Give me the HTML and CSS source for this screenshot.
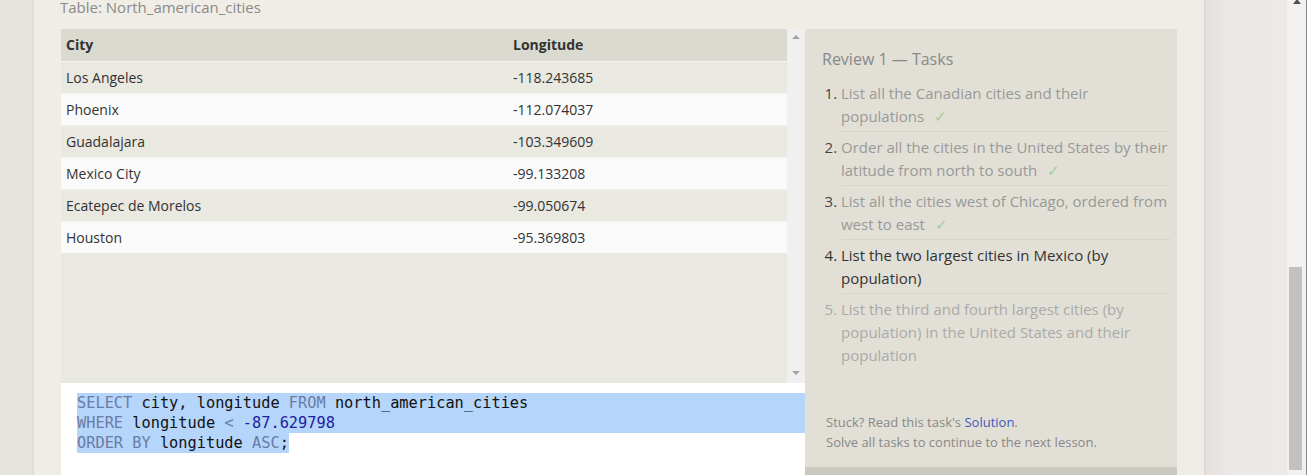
FILE: index.html
```html
<!DOCTYPE html>
<html lang="en">
<head>
<meta charset="utf-8">
<title>Review 1 — Tasks</title>
<link rel="stylesheet" href="styles.css">
</head>
<body>
<div class="page">
  <div class="gutter"></div>
  <main class="card">
    <div class="caption">Table: North_american_cities</div>
    <div class="workspace">
      <div class="left">
        <div class="results">
          <div class="table-wrap">
            <table class="data">
              <thead>
                <tr><th class="c1">City</th><th>Longitude</th></tr>
              </thead>
              <tbody>
                <tr><td class="c1">Los Angeles</td><td>-118.243685</td></tr>
                <tr><td class="c1">Phoenix</td><td>-112.074037</td></tr>
                <tr><td class="c1">Guadalajara</td><td>-103.349609</td></tr>
                <tr><td class="c1">Mexico City</td><td>-99.133208</td></tr>
                <tr><td class="c1">Ecatepec de Morelos</td><td>-99.050674</td></tr>
                <tr><td class="c1">Houston</td><td>-95.369803</td></tr>
              </tbody>
            </table>
          </div>
          <div class="vscroll">
            <span class="arrow-up"></span>
            <span class="arrow-down"></span>
          </div>
        </div>
        <div class="editor">
          <div class="line full-sel"><span class="kw">SELECT</span> city, longitude <span class="kw">FROM</span> north_american_cities</div>
          <div class="line full-sel"><span class="kw">WHERE</span> longitude <span class="kw">&lt;</span> <span class="num">-87.629798</span></div>
          <div class="line"><span class="part-sel"><span class="kw">ORDER BY</span> longitude <span class="kw">ASC</span>;</span></div>
        </div>
      </div>
      <aside class="tasks-col">
        <div class="tasks">
          <h2 class="tasks-title">Review 1 — Tasks</h2>
          <ol class="task-list">
            <li class="done"><span class="t">List all the Canadian cities and their populations<span class="check">✓</span></span></li>
            <li class="done"><span class="t">Order all the cities in the United States by their latitude from north to south<span class="check">✓</span></span></li>
            <li class="done"><span class="t">List all the cities west of Chicago, ordered from west to east<span class="check">✓</span></span></li>
            <li class="current">List the two largest cities in Mexico (by population)</li>
            <li class="todo">List the third and fourth largest cities (by population) in the United States and their population</li>
          </ol>
          <div class="stuck">
            <p>Stuck? Read this task's <a class="solution" href="#">Solution</a>.</p>
            <p>Solve all tasks to continue to the next lesson.</p>
          </div>
        </div>
        <div class="tasks-foot"></div>
      </aside>
    </div>
  </main>
  <div class="outside"></div>
  <div class="page-scroll">
    <span class="ps-up"></span>
    <div class="ps-thumb"></div>
  </div>
</div>
</body>
</html>
```

FILE: styles.css
```css
html, body {
  margin: 0;
  padding: 0;
}

body {
  font-family: "Open Sans", "Noto Sans", sans-serif;
  color: #333;
  background: #e8e4e0;
  overflow: hidden;
}

.page {
  display: flex;
  height: 475px;
  width: 1307px;
  overflow: hidden;
}

.gutter {
  width: 34px;
  flex: none;
  background: #e7e3df;
}

.card {
  width: 1170px;
  box-sizing: border-box;
  flex: none;
  background: #f0ede6;
  padding: 0 27px 0 26px;
  box-shadow: 0 0 3px rgba(0, 0, 0, 0.10);
  position: relative;
  z-index: 1;
  display: flex;
  flex-direction: column;
}

.caption {
  font-size: 15px;
  line-height: 16px;
  height: 16px;
  margin-top: -1px;
  color: #8a8a8a;
}

.workspace {
  display: flex;
  margin-top: 14px;
  padding-left: 1px;
  flex: 1;
  min-height: 0;
}

.left {
  width: 744px;
  flex: none;
  display: flex;
  flex-direction: column;
}

.results {
  height: 354px;
  display: flex;
  flex: none;
}

.table-wrap {
  width: 726px;
  background: #e9e8e1;
}

.data {
  width: 726px;
  border-collapse: collapse;
  font-size: 14px;
}

.data th,
.data td {
  height: 32px;
  padding: 0 5px;
  text-align: left;
  box-sizing: border-box;
}

.data th {
  background: #dbdad0;
  font-weight: 700;
  color: #333;
}

.data .c1 {
  width: 447px;
}

.data tbody tr:nth-child(odd) td {
  background: #e9e8e1;
}

.data tbody tr:nth-child(even) td {
  background: #fafafa;
}

.data tbody td {
  color: #333;
  border-top: 1px solid #f2f1ec;
}

.vscroll {
  width: 18px;
  background: #f0f0f0;
  display: flex;
  flex-direction: column;
  justify-content: space-between;
  align-items: center;
  padding: 6px 0 8px;
  box-sizing: border-box;
}

.arrow-up,
.arrow-down {
  width: 0;
  height: 0;
  border-left: 4px solid transparent;
  border-right: 4px solid transparent;
}

.arrow-up {
  border-bottom: 4px solid #a3a3a3;
}

.arrow-down {
  border-top: 4px solid #a3a3a3;
}

.editor {
  flex: 1;
  background: #ffffff;
  padding: 10px 0 0 16px;
  font-family: "DejaVu Sans Mono", "Liberation Mono", monospace;
  font-size: 15.3px;
  line-height: 20px;
  color: #111;
}

.line {
  height: 20px;
  white-space: pre;
}

.full-sel {
  background: #b5d5fb;
}

.part-sel {
  background: #b5d5fb;
  display: inline-block;
  height: 20px;
}

.kw {
  color: #6a7ca5;
}

.num {
  color: #1c22a0;
}

.tasks-col {
  width: 372px;
  flex: none;
  display: flex;
  flex-direction: column;
}

.tasks {
  height: 438px;
  background: #e2e0d6;
  padding: 19px 7px 15px 17px;
  box-sizing: border-box;
  display: flex;
  flex-direction: column;
}

.tasks-foot {
  flex: 1;
  background: #ccc9c1;
}

.tasks-title {
  margin: 0;
  font-size: 16px;
  line-height: 22px;
  font-weight: 400;
  color: #888;
}

.task-list {
  margin: 8px 0 0;
  padding-left: 19px;
  font-size: 15px;
  line-height: 23px;
}

.task-list li {
  padding: 4px 0 3px;
  border-bottom: 1px solid #d6d4ca;
}

.task-list li:last-child {
  border-bottom: none;
}

.task-list li.done {
  color: #444;
}

.task-list li.done .t {
  color: #999;
}

.task-list li.current {
  color: #333;
}

.task-list li.todo {
  color: #aaa;
}

.check {
  color: #9dcf9d;
  margin-left: 10px;
}

.stuck {
  margin-top: auto;
  padding-left: 4px;
  font-size: 13px;
  line-height: 20px;
  color: #888;
}

.stuck p {
  margin: 0;
}

.solution {
  color: #3b5bb8;
  text-decoration: none;
}

.outside {
  width: 83px;
  flex: none;
  background: linear-gradient(to right, #e6e0de, #ece8e5 30%, #ede9e6);
}

.page-scroll {
  width: 20px;
  flex: none;
  background: #f1f1f1;
  border-right: 1px solid #8a8a8a;
  box-sizing: border-box;
  display: flex;
  flex-direction: column;
  align-items: center;
}

.ps-up {
  width: 0;
  height: 0;
  margin-top: -1px;
  border-left: 4px solid transparent;
  border-right: 4px solid transparent;
  border-bottom: 5px solid #505050;
}

.ps-thumb {
  width: 13px;
  height: 203px;
  margin-top: 263px;
  margin-left: -3px;
  background: #c1c1c1;
}
```
